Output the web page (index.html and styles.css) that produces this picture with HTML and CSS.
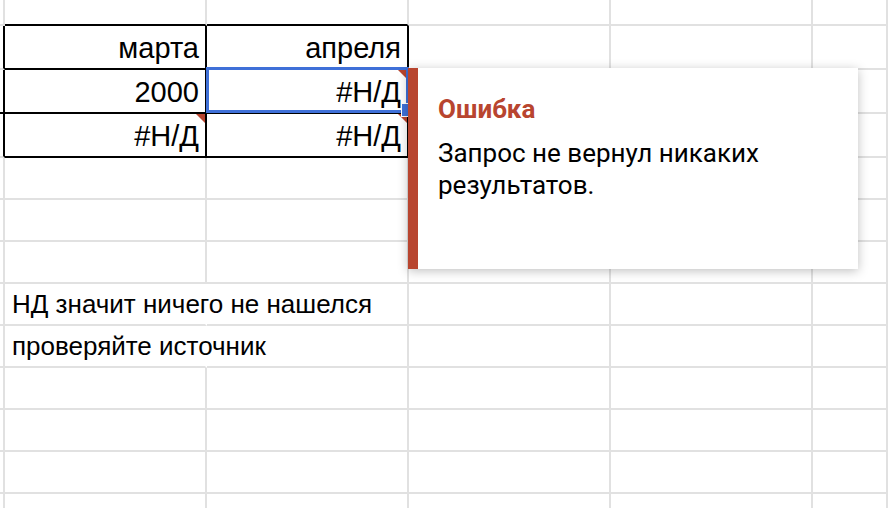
FILE: index.html
```html
<html>
  <head>
    <title>Таблица</title>
    <link rel="stylesheet" href="styles.css">
  </head>
  <body>
    <div class="sheet">
      <div class="row top">
        <div class="c z"></div><div class="c bb"></div><div class="c bb"></div><div class="c"></div><div class="c"></div><div class="c"></div>
      </div>
      <div class="row tall">
        <div class="c z br"></div><div class="c br bb">марта</div><div class="c br bb">апреля</div><div class="c"></div><div class="c"></div><div class="c"></div>
      </div>
      <div class="row tall">
        <div class="c z br bb"></div><div class="c br bb">2000</div><div class="c br bb err">#Н/Д</div><div class="c"></div><div class="c"></div><div class="c"></div>
      </div>
      <div class="row tall">
        <div class="c z br"></div><div class="c br bb err">#Н/Д</div><div class="c br bb err">#Н/Д</div><div class="c"></div><div class="c"></div><div class="c"></div>
      </div>
      <div class="row">
        <div class="c z"></div><div class="c"></div><div class="c"></div><div class="c"></div><div class="c"></div><div class="c"></div>
      </div>
      <div class="row">
        <div class="c z"></div><div class="c"></div><div class="c"></div><div class="c"></div><div class="c"></div><div class="c"></div>
      </div>
      <div class="row">
        <div class="c z"></div><div class="c"></div><div class="c"></div><div class="c"></div><div class="c"></div><div class="c"></div>
      </div>
      <div class="row">
        <div class="c z"></div><div class="c note">НД значит ничего не нашелся</div><div class="c"></div><div class="c"></div><div class="c"></div><div class="c"></div>
      </div>
      <div class="row">
        <div class="c z"></div><div class="c note">проверяйте источник</div><div class="c"></div><div class="c"></div><div class="c"></div><div class="c"></div>
      </div>
      <div class="row">
        <div class="c z"></div><div class="c"></div><div class="c"></div><div class="c"></div><div class="c"></div><div class="c"></div>
      </div>
      <div class="row">
        <div class="c z"></div><div class="c"></div><div class="c"></div><div class="c"></div><div class="c"></div><div class="c"></div>
      </div>
      <div class="row">
        <div class="c z"></div><div class="c"></div><div class="c"></div><div class="c"></div><div class="c"></div><div class="c"></div>
      </div>
      <div class="row">
        <div class="c z"></div><div class="c"></div><div class="c"></div><div class="c"></div><div class="c"></div><div class="c"></div>
      </div>

      <div class="selection"></div>
      <div class="handle"></div>

      <div class="tooltip">
        <div class="tip-title">Ошибка</div>
        <div class="tip-text">Запрос не вернул никаких результатов.</div>
      </div>
    </div>
  </body>
</html>
```

FILE: styles.css
```css
body { margin: 0; background: #fff; overflow: hidden; font-family: "Liberation Sans", Arial, sans-serif; color: #000; }
.sheet { position: relative; width: 888px; height: 508px; overflow: hidden; }

.row { display: grid; grid-template-columns: 5px 202px 202px 202px 202px 1fr; height: 42px; }
.row.top { height: 26px; }
.row.tall { height: 44px; }

.c {
  position: relative;
  box-sizing: border-box;
  min-width: 0;
  border-right: 2px solid #e1e1e1;
  border-bottom: 2px solid #e1e1e1;
  display: flex;
  align-items: flex-end;
  justify-content: flex-end;
  padding: 0 6px 3px 0;
  font-size: 29px;
  white-space: nowrap;
}
.c.z { padding: 0; }
.c.bb { border-bottom-color: #000; }
.c.br { border-right-color: #000; }

/* red corner = cell with an error */
.c.err::after {
  content: '';
  position: absolute;
  top: 0;
  right: 0;
  border-top: 9px solid #b8452f;
  border-left: 9px solid transparent;
}

/* overflow text hides the grid line on its right */
.c.note {
  justify-content: flex-start;
  padding: 0 0 4px 7px;
  font-size: 26px;
  border-right-color: #fff;
  z-index: 1;
}

.selection {
  position: absolute;
  left: 206px;
  top: 67px;
  width: 203px;
  height: 46px;
  box-sizing: border-box;
  border: 3px solid #3f70d8;
  z-index: 2;
}
.handle {
  position: absolute;
  left: 401px;
  top: 103px;
  width: 12px;
  height: 12px;
  background: #3f70d8;
  border: 1px solid #fff;
  z-index: 2;
}

.tooltip {
  position: absolute;
  left: 408px;
  top: 68px;
  width: 450px;
  height: 201px;
  box-sizing: border-box;
  background: #fff;
  border-left: 10px solid #b8452f;
  box-shadow: 0 2px 10px rgba(0, 0, 0, 0.25);
  padding: 26px 20px 0 20px;
  font-family: Roboto, "Noto Sans", sans-serif;
  z-index: 3;
}
.tip-title { color: #b8452f; font-weight: bold; font-size: 26px; line-height: 30px; }
.tip-text { margin-top: 13px; font-size: 26px; line-height: 32px; }
```
